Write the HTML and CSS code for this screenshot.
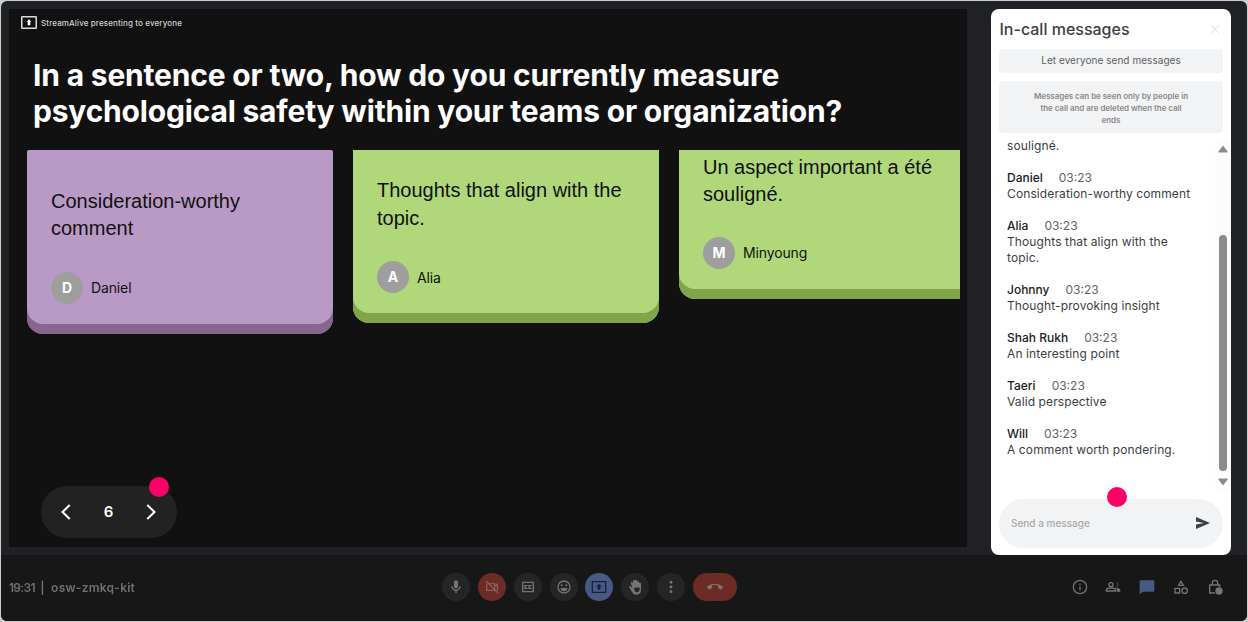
FILE: index.html
```html
<!DOCTYPE html>
<html lang="en">
  <head>
    <meta charset="UTF-8" />
    <meta name="viewport" content="width=device-width, initial-scale=1.0" />
    <title>In-call messages</title>
    <link rel="stylesheet" href="styles.css">
  </head>
  <body>
    <div class="meeting">
      <div class="main">
        <div class="stage">
          <div class="presenting">
            <svg width="16" height="13" viewBox="0 0 16 13"><rect x="0.75" y="0.75" width="14.5" height="11.5" rx="0.5" fill="none" stroke="#ddd" stroke-width="1.5"/><path d="M8 3.2l2.4 2.6H9.3v3.4H6.7V5.8H5.6z" fill="#fff"/></svg>
            <span>StreamAlive presenting to everyone</span>
          </div>
          <h1>In a sentence or two, how do you currently measure<br>psychological safety within your teams or organization?</h1>
          <div class="cards">
            <div class="card purple">
              <p>Consideration-worthy comment</p>
              <div class="author"><span class="avatar">D</span>Daniel</div>
            </div>
            <div class="card green">
              <p>Thoughts that align with the topic.</p>
              <div class="author"><span class="avatar">A</span>Alia</div>
            </div>
            <div class="card green cut">
              <p>Un aspect important a été souligné.</p>
              <div class="author"><span class="avatar">M</span>Minyoung</div>
            </div>
          </div>
          <div class="pager">
            <svg width="10" height="16" viewBox="0 0 10 16"><path d="M8.7 1L1.5 8l7.2 7"/></svg>
            <span>6</span>
            <svg width="10" height="16" viewBox="0 0 10 16"><path d="M1.3 1l7.2 7-7.2 7"/></svg>
            <i class="dot"></i>
          </div>
        </div>

        <div class="chat">
          <div class="chat-header">
            <h2>In-call messages</h2>
            <svg width="10" height="10" viewBox="0 0 10 10"><path d="M1 1l8 8M9 1L1 9" stroke="#ddd" fill="none"/></svg>
          </div>
          <div class="allow">Let everyone send messages</div>
          <div class="notice">Messages can be seen only by people in the call and are deleted when the call ends</div>
          <div class="log">
            <div class="messages">
              <div class="message"><p>souligné.</p></div>
              <div class="message"><b>Daniel</b><time>03:23</time><p>Consideration-worthy comment</p></div>
              <div class="message"><b>Alia</b><time>03:23</time><p>Thoughts that align with the topic.</p></div>
              <div class="message"><b>Johnny</b><time>03:23</time><p>Thought-provoking insight</p></div>
              <div class="message"><b>Shah Rukh</b><time>03:23</time><p>An interesting point</p></div>
              <div class="message"><b>Taeri</b><time>03:23</time><p>Valid perspective</p></div>
              <div class="message"><b>Will</b><time>03:23</time><p>A comment worth pondering.</p></div>
            </div>
            <div class="scrollbar">
              <svg width="10" height="8" viewBox="0 0 10 8"><path d="M5 .5L9.6 6.5Q9.8 7.5 9 7.5H1Q.2 7.5.4 6.5z"/></svg>
              <div class="thumb"></div>
              <svg width="10" height="8" viewBox="0 0 10 8"><path d="M5 7.5L9.6 1.5Q9.8.5 9 .5H1Q.2.5.4 1.5z"/></svg>
            </div>
          </div>
          <div class="send">
            <span>Send a message</span>
            <svg width="14" height="12" viewBox="0 0 14 12"><path d="M0 12L14 6 0 0v4.6L8 6 0 7.4z" fill="#3c4043"/></svg>
            <i class="dot"></i>
          </div>
        </div>
      </div>

      <div class="footer">
        <div class="code"><span>19:31</span><span>|</span><span>osw-zmkq-kit</span></div>
        <div class="controls">
          <span class="btn"><svg viewBox="0 0 24 24"><path d="M12 14c1.66 0 3-1.34 3-3V5c0-1.66-1.34-3-3-3S9 3.34 9 5v6c0 1.66 1.34 3 3 3zm5-3c0 2.76-2.24 5-5 5s-5-2.24-5-5H5c0 3.53 2.61 6.43 6 6.92V21h2v-3.08c3.39-.49 6-3.39 6-6.92h-2z"/></svg></span>
          <span class="btn red"><svg viewBox="0 0 24 24"><path class="line" d="M8.5 7H16v8M20 17V8l-4 3M16 17H4V7M3 3l18 18"/></svg></span>
          <span class="btn"><svg viewBox="0 0 24 24"><path class="line" d="M4 5h16v14H4zM10.5 10.5v-.5h-3v4h3v-.5M16.5 10.5v-.5h-3v4h3v-.5"/></svg></span>
          <span class="btn"><svg viewBox="0 0 24 24"><circle class="line" cx="12" cy="12" r="9"/><circle cx="8.5" cy="9.5" r="1.5"/><circle cx="15.5" cy="9.5" r="1.5"/><path d="M7 13.5h10a5 5 0 0 1-10 0z"/></svg></span>
          <span class="btn blue"><svg viewBox="0 0 24 24"><path class="line" d="M2 4h20v16H2z"/><path d="M12 7l4.5 4.5H14V16h-4v-4.5H7.5z"/></svg></span>
          <span class="btn"><svg viewBox="0 0 24 24"><path fill-rule="evenodd" d="M21 7v10c0 3.9-3.1 6.5-7 6.5-3 0-5.2-1.5-6.5-4L3 11.5c1.2-1.2 2.8-.8 3.5.5L8 14 5.5 5c1-1.5 2.5-1 3 .3L9 7V2.5c.8-1.2 2.4-1.2 3 0 .8-2 3-1.6 3.2 0V4c1-1 2.8-.7 2.8 1v1c1-1 3-.6 3 1zM11 14c0 4 1.5 6 3.5 6s4.5-1.5 4.5-5-1.5-2-3.5-2-4.5-1-4.5 1z"/></svg></span>
          <span class="btn"><svg viewBox="0 0 24 24"><circle cx="12" cy="5" r="2.2"/><circle cx="12" cy="12" r="2.2"/><circle cx="12" cy="19" r="2.2"/></svg></span>
          <span class="btn red end"><svg viewBox="0 0 24 24"><path d="M12 9c-1.6 0-3.15.25-4.6.72v3.1c0 .39-.23.74-.56.9-.98.49-1.87 1.12-2.66 1.85-.18.18-.43.28-.7.28-.28 0-.53-.11-.71-.29L.29 13.08a.99.99 0 0 1 0-1.41C3.34 8.78 7.46 7 12 7s8.66 1.78 11.71 4.67a.99.99 0 0 1 0 1.41l-2.48 2.48c-.18.18-.43.29-.71.29-.27 0-.52-.11-.7-.28a11.3 11.3 0 0 0-2.67-1.85.99.99 0 0 1-.56-.9v-3.1C15.15 9.25 13.6 9 12 9z"/></svg></span>
        </div>
        <div class="tools">
          <svg viewBox="0 0 24 24"><circle class="line" cx="12" cy="12" r="10"/><path d="M11 11h2v6h-2zM11 7h2v2h-2z"/></svg>
          <svg viewBox="0 0 24 24"><circle class="line" cx="9" cy="8.5" r="3"/><path class="line" d="M2 18v-1.5c0-2 4.5-3 7-3s7 1 7 3V18z"/><path d="M15 12.5a4 4 0 0 0 0-8c3-.8 5 1.2 5 4s-2 4.8-5 4zM18 19v-2.5c0-1.5-.8-2.5-2-3.3 3 .3 7 1.3 7 3.3V19z"/></svg>
          <svg class="active" viewBox="0 0 24 24"><path d="M2 2h20a1 1 0 0 1 1 1v15a1 1 0 0 1-1 1H6l-5 4V3a1 1 0 0 1 1-1z"/></svg>
          <svg viewBox="0 0 24 24"><path class="line" d="M12 3.5L8.5 9.5h7zM3 14h7v7H3z"/><circle class="line" cx="17.5" cy="17.5" r="4"/></svg>
          <svg viewBox="0 0 24 24"><path class="line" d="M12 21H4V9h15v3M8 9V6a4 4 0 0 1 8 0v3"/><circle cx="18" cy="18" r="5.5"/></svg>
        </div>
      </div>
    </div>
  </body>
</html>
```
FILE: styles.css
```css
* {
  margin: 0;
  padding: 0;
  box-sizing: border-box;
}

body {
  height: 622px;
  padding: 1px;
  background: #c9cfcb;
  font-family: Inter, sans-serif;
  overflow: hidden;
}

.meeting {
  height: 620px;
  display: flex;
  flex-direction: column;
  background: #202124;
  border-radius: 6px;
  overflow: hidden;
}

.main {
  height: 554px;
  display: flex;
  justify-content: space-between;
  padding: 8px 16px 0 8px;
}

.stage {
  width: 958px;
  height: 538px;
  display: flex;
  flex-direction: column;
  background: #111;
  padding-left: 18px;
}

.presenting {
  display: flex;
  align-items: center;
  gap: 4px;
  height: 13px;
  margin: 7px 0 0 -6px;
  color: #d0d0d0;
  font-size: 8px;
  font-weight: 500;
  letter-spacing: 0.13px;
}

h1 {
  margin: 28px 0 0 6px;
  color: #fff;
  font-size: 30px;
  font-weight: 700;
  letter-spacing: -0.19px;
  line-height: 36px;
  white-space: nowrap;
}

.cards {
  display: flex;
  align-items: flex-start;
  gap: 20px;
  height: 190px;
  margin: 21px 7px 0 0;
  overflow: hidden;
}

.card {
  width: 306px;
  flex: none;
  padding: 0 24px;
  border-radius: 0 0 16px 16px;
  color: #111;
}

.card p {
  font-family: "Liberation Sans", sans-serif;
  font-size: 20px;
  line-height: 27.5px;
}

.purple {
  height: 184px;
  padding-top: 37.5px;
  border-radius: 2px 2px 16px 16px;
  background: #b99ac7;
  box-shadow: inset 0 -10px #876690;
}

.green {
  height: 172.5px;
  padding-top: 27px;
  background: #b0d87a;
  box-shadow: inset 0 -10px #7fa548;
}

.cut {
  height: 149px;
  padding-top: 3.5px;
}

.author {
  display: flex;
  align-items: center;
  gap: 8px;
  margin-top: 29px;
  font-size: 14px;
  letter-spacing: -0.13px;
}

.cut .author {
  margin-top: 28.4px;
}

.avatar {
  width: 32px;
  height: 32px;
  border-radius: 50%;
  background: #9e9e9e;
  color: #fff;
  font-weight: 700;
  line-height: 32px;
  text-align: center;
}

.pager {
  position: relative;
  display: flex;
  align-items: center;
  justify-content: space-between;
  width: 136px;
  height: 52px;
  margin: auto 0 9px 14px;
  padding: 0 21px 1px 20px;
  border-radius: 26px;
  background: #222;
  color: #fff;
  font-size: 15px;
  font-weight: 600;
}

.pager path {
  fill: none;
  stroke: #fff;
  stroke-width: 2;
}

.dot {
  position: absolute;
  width: 20px;
  height: 20px;
  border-radius: 50%;
  background: #ff0066;
}

.pager .dot {
  top: -9px;
  right: 8px;
}

.chat {
  width: 240px;
  height: 546px;
  display: flex;
  flex-direction: column;
  padding: 8px 8px 7px;
  border-radius: 8px;
  background: #fff;
}

.chat-header {
  display: flex;
  align-items: center;
  justify-content: space-between;
  height: 24px;
  padding: 0 3px 1px 0.5px;
}

h2 {
  color: #3c4043;
  font-size: 16px;
  font-weight: 450;
  letter-spacing: 0;
}

.allow,
.notice {
  margin-top: 8px;
  border-radius: 4px;
  background: #f1f3f4;
  color: #5f5f63;
  text-align: center;
}

.allow {
  font-size: 10px;
  font-weight: 400;
  letter-spacing: 0.05px;
  line-height: 23.5px;
}

.notice {
  height: 52.5px;
  padding: 9px 32px 0;
  color: #8a8a8a;
  font-size: 8px;
  font-weight: 600;
  letter-spacing: -0.05px;
  line-height: 12px;
}

.log {
  display: flex;
  flex: none;
  justify-content: space-between;
  height: 349px;
  margin: 8px -8px 0 8px;
}

.messages {
  width: 190px;
  margin-top: -3px;
  color: #3c4043;
  font-size: 12px;
  line-height: 16px;
}

.message {
  margin-bottom: 16px;
}

.message p {
  letter-spacing: 0.11px;
}

.message b {
  color: #202124;
  font-weight: 500;
}

.message time {
  margin-left: 16px;
  color: #5f6368;
}

.scrollbar {
  display: flex;
  flex-direction: column;
  align-items: center;
  width: 16px;
  padding-top: 4px;
  background: #fcfcfc;
}

.scrollbar svg {
  fill: #8b8b8b;
}

.thumb {
  width: 8px;
  height: 236px;
  margin: 82px 0 7px;
  border-radius: 4px;
  background: #8b8b8b;
}

.send {
  position: relative;
  display: flex;
  flex: none;
  align-items: center;
  justify-content: space-between;
  height: 49.5px;
  margin-top: 8.5px;
  padding: 0 13px 0 12px;
  border-radius: 25px;
  background: #f1f3f4;
  color: #aaa;
  font-size: 10px;
  font-weight: 500;
}

.send .dot {
  top: -12px;
  left: 108px;
}

.footer {
  display: grid;
  grid-template-columns: 433.3px 1fr 151px;
  align-items: center;
  height: 66px;
  padding: 0 24.5px 2px 8px;
  background: #171718;
}

.code,
.controls,
.tools {
  filter: blur(0.6px);
}

.code {
  display: flex;
  gap: 6.5px;
  color: #707070;
  font-size: 12px;
  font-weight: 600;
}

.code span:first-child {
  letter-spacing: -0.7px;
}

.code span:nth-child(2) {
  margin-left: -1px;
}

.code span:last-child {
  letter-spacing: 0.25px;
}

.footer svg {
  width: 16px;
  height: 16px;
  fill: #747474;
}

.footer .line {
  fill: none;
  stroke: #747474;
  stroke-width: 2;
}

.controls {
  display: flex;
  gap: 7.8px;
}

.btn {
  display: flex;
  align-items: center;
  justify-content: center;
  width: 28px;
  height: 28px;
  border-radius: 14px;
  background: #232527;
}

.red {
  background: #6d2b26;
}

.footer .red svg {
  fill: #85706e;
}

.footer .red .line {
  stroke: #85605c;
}

.blue {
  background: #465a84;
}

.footer .blue path {
  fill: #18223a;
}

.footer .blue .line {
  fill: none;
  stroke: #18223a;
}

.end {
  width: 44px;
}

.tools {
  display: flex;
  justify-content: space-between;
}

.footer .active {
  fill: #465a84;
}
```
